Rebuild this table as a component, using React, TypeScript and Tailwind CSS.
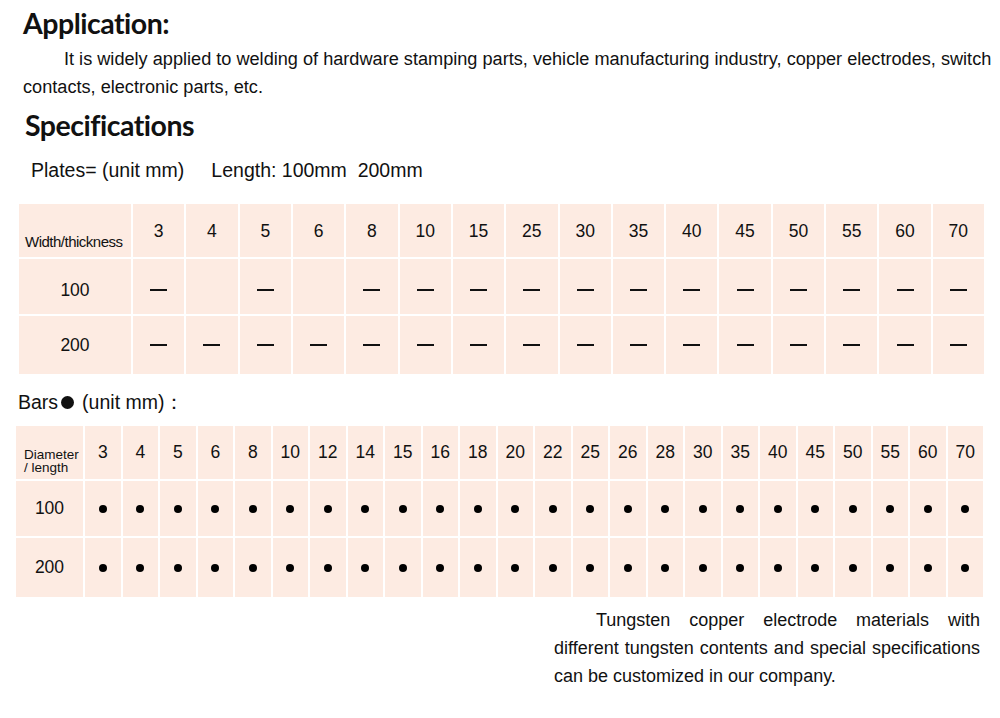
import React from 'react';

const plateSizes = ['3', '4', '5', '6', '8', '10', '15', '25', '30', '35', '40', '45', '50', '55', '60', '70'];
// which sizes are available for 100mm plates
const plate100 = [true, false, true, false, true, true, true, true, true, true, true, true, true, true, true, true];

const barSizes = ['3', '4', '5', '6', '8', '10', '12', '14', '15', '16', '18', '20', '22', '25', '26', '28', '30', '35', '40', '45', '50', '55', '60', '70'];

const Cell = ({ children, className = '' }: { children?: React.ReactNode; className?: string }) => (
  <div className={`bg-[#fdebe2] flex items-center justify-center ${className}`}>{children}</div>
);

const Dash = () => <span className="block w-[17px] h-[2.5px] bg-[#111]" />;

const Dot = () => <span className="block w-[8px] h-[8px] rounded-full bg-black" />;

const App: React.FC = () => {
  return (
    <div className="w-[1000px] h-[718px] bg-white text-[#111] overflow-hidden font-['Liberation_Sans',Arial,sans-serif]">
      {/* Application */}
      <h2 className="pl-[23px] pt-[6px] text-[28.5px] leading-[34px] font-bold tracking-[-0.5px] font-['Lato','Noto_Sans',sans-serif]">
        Application:
      </h2>
      <p className="pl-[23px] text-[18.15px] leading-[28px] mt-[5px] whitespace-nowrap">
        <span className="pl-[41px]">It is widely applied to welding of hardware stamping parts, vehicle manufacturing industry, copper electrodes, switch</span>
        <br />
        contacts, electronic parts, etc.
      </p>

      {/* Specifications */}
      <h2 className="pl-[25px] mt-[7px] text-[28.5px] leading-[34px] font-bold tracking-[-0.5px] font-['Lato','Noto_Sans',sans-serif]">
        Specifications
      </h2>
      <div className="pl-[31px] mt-[15px] text-[19.5px] leading-[26px] flex">
        <span>Plates= (unit mm)</span>
        <span className="ml-[27px]">Length: 100mm&nbsp;&nbsp;200mm</span>
      </div>

      {/* Plates table */}
      <div className="ml-[19px] mt-[21px] w-[965px] grid grid-cols-[112px_repeat(16,1fr)] grid-rows-[53px_55px_58px] gap-[2px]">
        <Cell className="justify-start items-end pb-[8px] pl-[6px]">
          <span className="text-[15px] leading-none tracking-[-0.5px]">Width/thickness</span>
        </Cell>
        {plateSizes.map((s) => (
          <Cell key={s} className="text-[17.5px] pt-[2px]">
            {s}
          </Cell>
        ))}
        <Cell className="text-[17.5px] pt-[8px]">100</Cell>
        {plate100.map((on, i) => (
          <Cell key={i} className="pt-[7px]">
            {on && <Dash />}
          </Cell>
        ))}
        <Cell className="text-[17.5px]">200</Cell>
        {plateSizes.map((s) => (
          <Cell key={s}>
            <Dash />
          </Cell>
        ))}
      </div>

      {/* Bars */}
      <div className="pl-[18px] mt-[15px] text-[19.5px] leading-[26px] flex items-center">
        <span>Bars</span>
        <span className="ml-[3px] block w-[13px] h-[13px] rounded-full bg-[#111]" />
        <span className="ml-[8px]">(unit mm)：</span>
      </div>

      <div className="ml-[16px] mt-[11px] w-[967px] grid grid-cols-[67px_repeat(24,1fr)] grid-rows-[53px_55px_59px] gap-[2px]">
        <Cell className="justify-start items-end pb-[5px] pl-[8px]">
          <span className="text-[13.5px] leading-[13px]">
            Diameter
            <br />/ length
          </span>
        </Cell>
        {barSizes.map((s) => (
          <Cell key={s} className="text-[17.5px]">
            {s}
          </Cell>
        ))}
        <Cell className="text-[17.5px]">100</Cell>
        {barSizes.map((s) => (
          <Cell key={s}>
            <Dot />
          </Cell>
        ))}
        <Cell className="text-[17.5px]">200</Cell>
        {barSizes.map((s) => (
          <Cell key={s}>
            <Dot />
          </Cell>
        ))}
      </div>

      {/* Customization note */}
      <div className="flex justify-end pr-[20px] mt-[9px]">
        <div className="w-[426px] text-[18px] leading-[28px]">
          <p className="pl-[42px] text-justify [text-align-last:justify]">Tungsten copper electrode materials with</p>
          <p className="text-justify [text-align-last:justify]">different tungsten contents and special specifications</p>
          <p>can be customized in our company.</p>
        </div>
      </div>
    </div>
  );
};

export default App;
